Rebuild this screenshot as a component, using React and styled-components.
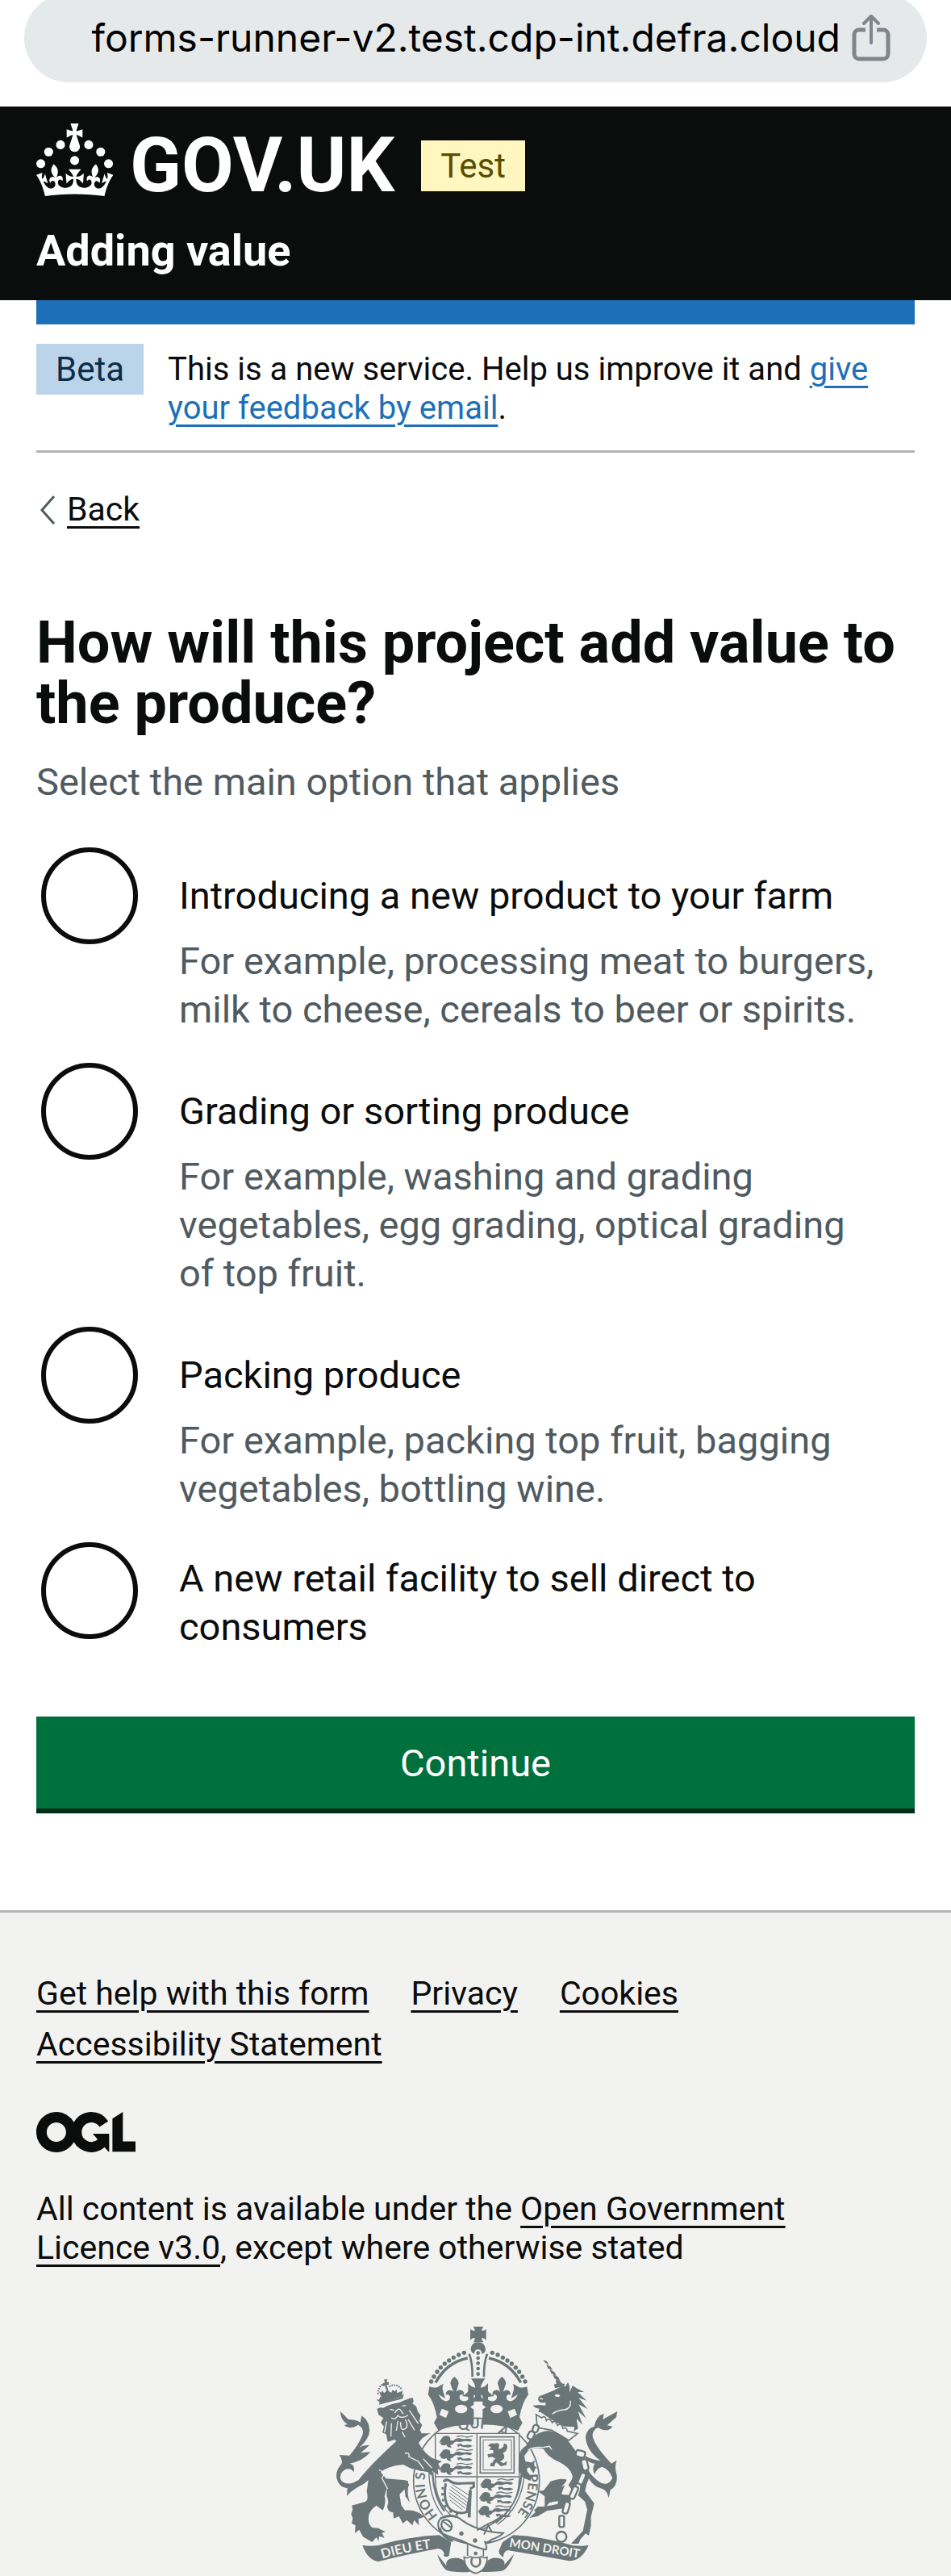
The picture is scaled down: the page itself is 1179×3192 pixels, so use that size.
import React from "react";
import styled, { createGlobalStyle } from "styled-components";

const color = {
  text: "#0b0c0c",
  secondary: "#505a5f",
  link: "#1d70b8",
  border: "#b1b4b6",
  footer: "#f2f2f0",
  crest: "#6b7678",
};

const GlobalStyle = createGlobalStyle`
  *, *::before, *::after { box-sizing: border-box; }
  body {
    margin: 0;
    background: #ffffff;
    color: ${color.text};
    font-family: Roboto, "Liberation Sans", sans-serif;
  }
`;

/* Browser address bar */

const BrowserBar = styled.div`
  display: flex;
  align-items: flex-start;
  height: 132px;
  padding: 0 30px;
  overflow: hidden;
`;

const AddressPill = styled.div`
  flex: 1;
  display: flex;
  align-items: center;
  justify-content: flex-end;
  gap: 14px;
  height: 110px;
  margin-top: -8px;
  padding: 0 45px 0 80px;
  border-radius: 55px;
  background: #e5e9ea;
`;

const Address = styled.span`
  color: #000000;
  font-family: Inter, Roboto, sans-serif;
  font-size: 48px;
  line-height: 60px;
  white-space: nowrap;
`;

const ShareButton = styled.button`
  display: flex;
  padding: 0;
  border: 0;
  background: none;
`;

/* Header */

const Header = styled.header`
  padding: 21px 45px 0;
  background: ${color.text};
  color: #ffffff;
`;

const LogoRow = styled.div`
  display: flex;
  align-items: flex-start;
  gap: 33px;
  height: 90px;
`;

const HomeLink = styled.a`
  display: flex;
  align-items: flex-start;
  gap: 20px;
  color: inherit;
  font-size: 94px;
  font-weight: 700;
  line-height: 105px;
  text-decoration: none;
`;

const Tag = styled.strong`
  flex: none;
  height: 63px;
  margin-top: ${(p) => p.$top || 0}px;
  padding: 6px 24px;
  background: ${(p) => (p.$tone === "yellow" ? "#fff7bf" : "#bbd4ea")};
  color: ${(p) => (p.$tone === "yellow" ? "#594d00" : "#0c2d4a")};
  font-size: 42px;
  font-weight: 400;
  line-height: 51px;
`;

const ServiceLink = styled.a`
  display: block;
  padding: 30px 0 24px;
  color: inherit;
  font-size: 54px;
  font-weight: 700;
  line-height: 75px;
  text-decoration: none;
`;

/* Page */

const Container = styled.div`
  padding: 0 45px;
`;

const BlueBar = styled.div`
  height: 30px;
  background: ${color.link};
`;

const PhaseBanner = styled.div`
  display: flex;
  align-items: flex-start;
  gap: 30px;
  padding: 24px 0 28px;
  border-bottom: 3px solid ${color.border};
`;

const BodyText = styled.p`
  margin: 0;
  font-size: 41px;
  line-height: 48px;
`;

const PhaseText = styled(BodyText)`
  padding-top: 8px;
  font-size: 40px;
`;

const LicenceText = styled(BodyText)`
  padding-right: 60px;
`;

const Link = styled.a`
  color: ${(p) => (p.$blue ? color.link : color.text)};
  text-decoration: underline;
  text-decoration-thickness: 3px;
  text-underline-offset: 7px;
`;

const BackRow = styled.nav`
  display: flex;
  align-items: center;
  gap: 14px;
  margin-top: 45px;
  padding-left: 4px;
  font-size: 41px;
  line-height: 51px;
`;

const Main = styled.main`
  padding-top: 102px;
`;

const Fieldset = styled.fieldset`
  min-width: 0;
  margin: 0;
  padding: 0;
  border: 0;
`;

const Legend = styled.legend`
  padding: 0;
`;

const Heading = styled.h1`
  margin: 0;
  font-size: 72px;
  font-weight: 700;
  line-height: 75px;
`;

const Hint = styled.p`
  margin: 0;
  color: ${color.secondary};
  font-size: 47px;
  line-height: 60px;
`;

const LegendHint = styled(Hint)`
  margin-top: 30px;
`;

const Options = styled.div`
  display: flex;
  flex-direction: column;
  gap: 30px;
  margin-top: 45px;
`;

const Option = styled.div`
  display: grid;
  grid-template-columns: 132px minmax(0, 1fr);
`;

const Radio = styled.input`
  appearance: none;
  width: 120px;
  height: 120px;
  margin: 6px;
  border: 6px solid ${color.text};
  border-radius: 50%;
  background: transparent;
`;

const OptionLabel = styled.label`
  align-self: center;
  padding: 21px 45px;
  font-size: 47px;
  line-height: 60px;
`;

const OptionHint = styled(Hint)`
  grid-column: 2;
  margin-top: -15px;
  padding: 0 45px;
`;

const SubmitButton = styled.button`
  display: block;
  width: 100%;
  height: 120px;
  margin: 60px 0 120px;
  padding: 0 0 6px;
  border: 0;
  background: #00703c;
  box-shadow: inset 0 -6px 0 #002d18;
  color: #ffffff;
  font-family: inherit;
  font-size: 47px;
  line-height: 57px;
`;

/* Footer */

const Footer = styled.footer`
  padding: 76px 45px 0;
  border-top: 3px solid ${color.border};
  background: ${color.footer};
`;

const FooterLinks = styled.ul`
  display: flex;
  flex-wrap: wrap;
  gap: 15px 52px;
  margin: 0 0 60px;
  padding: 0;
  list-style: none;
  font-size: 41px;
  line-height: 48px;
`;

const Licence = styled.div`
  display: flex;
  flex-direction: column;
  gap: 46px;
`;

const CrestLink = styled.a`
  display: flex;
  justify-content: center;
  margin-top: 74px;
`;

const options = [
  {
    id: "new-product",
    label: "Introducing a new product to your farm",
    hint: "For example, processing meat to burgers, milk to cheese, cereals to beer or spirits.",
  },
  {
    id: "grading",
    label: "Grading or sorting produce",
    hint: "For example, washing and grading vegetables, egg grading, optical grading of top fruit.",
  },
  {
    id: "packing",
    label: "Packing produce",
    hint: "For example, packing top fruit, bagging vegetables, bottling wine.",
  },
  { id: "retail", label: "A new retail facility to sell direct to consumers" },
];

const footerLinks = ["Get help with this form", "Privacy", "Cookies", "Accessibility Statement"];

function ShareIcon() {
  return (
    <svg width="48" height="60" viewBox="0 0 48 60" fill="none" stroke="#80868b" strokeWidth="5" aria-hidden="true">
      <path d="M17 20H9a6 6 0 0 0-6 6v24a6 6 0 0 0 6 6h30a6 6 0 0 0 6-6V26a6 6 0 0 0-6-6h-8" />
      <path d="M24 36V4M15 12l9-9 9 9" strokeLinecap="round" strokeLinejoin="round" strokeWidth="4" />
    </svg>
  );
}

function CrownIcon() {
  return (
    <svg width="96" height="90" viewBox="0 0 64 60" fill="currentColor" aria-hidden="true">
      <circle cx="20" cy="17.6" r="3.7" />
      <circle cx="10.2" cy="23.5" r="3.7" />
      <circle cx="3.7" cy="33.2" r="3.7" />
      <circle cx="31.7" cy="30.6" r="3.7" />
      <circle cx="43.3" cy="17.6" r="3.7" />
      <circle cx="53.2" cy="23.5" r="3.7" />
      <circle cx="59.7" cy="33.2" r="3.7" />
      <path d="M33.1,9.8c.2-.1.3-.3.5-.5l4.6,2.4v-6.8l-4.6,1.5c-.1-.2-.3-.3-.5-.5l1.9-5.9h-6.7l1.9,5.9c-.2.1-.3.3-.5.5l-4.6-1.5v6.8l4.6-2.4c.1.2.3.3.5.5l-2.6,8c-.9,2.8,1.2,5.7,4.1,5.7h0c3,0,5.1-2.9,4.1-5.7l-2.6-8ZM37,37.9s-3.4,3.8-4.1,6.1c2.2,0,4.2-.5,6.4-2.8l-.7,8.5c-2-2.8-4.4-4.1-5.7-3.8.1,3.1.5,6.7,5.8,7.2,3.7.3,6.7-1.5,7-3.8.4-2.6-2-4.3-3.7-1.6-1.4-4.5,2.4-6.1,4.9-3.2-1.9-4.5-1.8-7.7,2.4-10.9,3,4,2.6,7.3-1.2,11.1,2.4-1.3,6.2,0,4,4.6-1.2-2.8-3.7-2.2-4.2.2-.3,1.7.7,3.7,3,4.2,1.9.3,4.7-.9,7-5.9-1.3,0-2.4.7-3.9,1.7l2.4-8c.6,2.3,1.4,3.7,2.2,4.5.6-1.6.5-2.8,0-5.3l5,1.8c-2.6,3.6-5.2,8.7-7.3,17.5-7.4-1.1-15.7-1.7-24.5-1.7h0c-8.8,0-17.1.6-24.5,1.7-2.1-8.9-4.7-13.9-7.3-17.5l5-1.8c-.5,2.5-.6,3.7,0,5.3.8-.8,1.6-2.3,2.2-4.5l2.4,8c-1.5-1-2.6-1.7-3.9-1.7,2.3,5,5.2,6.2,7,5.9,2.3-.4,3.3-2.4,3-4.2-.5-2.4-3-3.1-4.2-.2-2.2-4.6,1.6-6,4-4.6-3.7-3.7-4.2-7.1-1.2-11.1,4.2,3.2,4.3,6.4,2.4,10.9,2.5-2.8,6.3-1.3,4.9,3.2-1.8-2.7-4.1-1-3.7,1.6.3,2.3,3.3,4.1,7,3.8,5.4-.5,5.7-4.2,5.8-7.2-1.3-.2-3.7,1-5.7,3.8l-.7-8.5c2.2,2.3,4.2,2.7,6.4,2.8-.7-2.3-4.1-6.1-4.1-6.1h10.6,0Z" />
    </svg>
  );
}

function BackChevron() {
  return (
    <svg width="20" height="36" viewBox="0 0 20 36" fill="none" stroke={color.secondary} strokeWidth="3" aria-hidden="true">
      <path d="M18 1 3 18l15 17" />
    </svg>
  );
}

function OglLogo() {
  return (
    <svg width="123" height="50" viewBox="0 0 483.2 195.7" fill="currentColor" aria-label="Open Government Licence" role="img">
      <path d="M421.5 142.8V.1l-50.7 32.3v161.1h112.4v-50.7zm-122.3-9.6A47.12 47.12 0 0 1 221 97.8c0-26 21.1-47.1 47.1-47.1 16.7 0 31.4 8.7 39.7 21.8l42.7-27.2A97.63 97.63 0 0 0 268.1 0c-36.5 0-68.3 20.1-85.1 49.7A98 98 0 0 0 97.8 0C43.9 0 0 43.9 0 97.8s43.9 97.8 97.8 97.8c36.5 0 68.3-20.1 85.1-49.7a97.76 97.76 0 0 0 149.6 25.4l19.4 22.2h3v-87.8h-80l24.3 27.5zM97.8 145c-26 0-47.1-21.1-47.1-47.1s21.1-47.1 47.1-47.1 47.1 21.1 47.1 47.1S123.8 145 97.8 145" />
    </svg>
  );
}

/* A walking lion, used three to a quarter of the shield */
function SmallLion({ x, y }) {
  return (
    <g transform={`translate(${x} ${y})`}>
      <path d="M12 4q10-6 22-1 8 6 4 15l12 1q10-12 24-9 10 4 22 2 14-2 24 4-2 8-12 6-12-4-24 0-12 4-22 0-10 2-14 10l-10 4 6 9-14-2-6-9-10 2q-9-4-8-12l-8 2 2-6z" />
      <path d="M0 26l12 0 8 10-14-1zM64 32l14-2 8 6 24-2 12 5-14 5-24-2-8-4-8 4z" />
      <path d="M62 5q14-7 26-2t34-1" fill="none" stroke="currentColor" strokeWidth="4" />
    </g>
  );
}

/* One half of the crown's rim, arch and pearls; drawn twice, once mirrored */
function CrownHalf() {
  const pearls = [
    [526, 136], [506, 144], [487, 154], [470, 165], [454, 177], [439, 191], [426, 207], [414, 225], [404, 243],
  ];
  return (
    <g>
      {pearls.map(([cx, cy]) => (
        <circle key={cx} cx={cx} cy={cy} r="8" />
      ))}
      <path d="M539 156q-78 16-119 91" fill="none" stroke="currentColor" strokeWidth="10" />
      <path d="M545 140q13 34 12 86" fill="none" stroke="currentColor" strokeWidth="8" />
      <path d="M397 262q18 6 30 2l22-13q-6 17-1 29l8 26-25-15q13 27 31 25 13-2 11-18-5-10-15-5-1-17 14-18 10 0 14 7l-11-32q1-13 15-25 15 12 16 25l-9 32q6-9 17-7 14 3 11 19-11-8-16 4-2 14 13 18 18 3 27-15l-31-4q23-10 28-26l16 18v115q-70-2-131 22l-17-29 11-21q-10-55-33-84z" />
    </g>
  );
}

function RoyalCrest() {
  return (
    <svg width="380" height="309" viewBox="0 39 1140 927" fill="currentColor" color={color.crest} role="img" aria-label="Royal coat of arms">
      <defs>
        <path id="garter-left" d="M429 742A192 192 0 0 1 444 470" />
        <path id="garter-top" d="M508 428A196 196 0 0 1 660 438" />
        <path id="garter-top-right" d="M650 434A196 196 0 0 1 740 512" />
        <path id="garter-right" d="M752 546A192 192 0 0 1 640 794" />
        <path id="ribbon-left" d="M222 902Q320 872 440 860" />
        <path id="ribbon-right" d="M693 857Q820 876 980 904" />
      </defs>

      {/* garter */}
      <path d="M352 480q18-34 50-44h-46l-40-4 40 66z" />
      <circle cx="572" cy="613" r="234" fill={color.footer} stroke="currentColor" strokeWidth="5" />
      <path d="M395 575q2 105 52 165M750 590q-10 120-100 185" fill="none" stroke="currentColor" strokeWidth="4" />
      <path d="M409 580q3 90 44 145M739 590q-8 110-95 178" fill="none" stroke="currentColor" strokeWidth="7" />

      {/* crown */}
      <path d="M549 47q6 9 17 7-1-7-6-15h38q-6 8-6 15 10 2 16-7v42q-7-9-16-8-1 9 6 16h-38q7-7 6-16-11-1-17 8z" />
      <path d="M551 126q0-29 27-29t28 29q-4 14-14 14-1-16-14-16t-14 16q-9-2-13-14z" />
      <CrownHalf />
      <g transform="matrix(-1 0 0 1 1157 0)">
        <CrownHalf />
      </g>
      <path d="M552 232h53q-15 18-17 34 16-2 27-17v62q-13-17-27-18 4 18 20 24h-60q17-7 20-24-15 1-27 18v-62q11 15 27 17-2-16-16-34z" />
      {[137, 156, 175, 195, 215].map((cy) => (
        <circle key={cy} cx="578" cy={cy} r="7" />
      ))}
      <g fill={color.footer}>
        <ellipse cx="515" cy="345" rx="23" ry="16" />
        <ellipse cx="647" cy="345" rx="23" ry="16" />
        <path d="M549 338l29-20 29 20-29 20zM434 367l9-23 26 10-10 25zM723 367l-9-23-26 10 10 25z" />
      </g>

      {/* garter lettering */}
      <g fontFamily="Lato, Roboto, sans-serif" fontSize="50" fontWeight="700">
        <text><textPath href="#garter-left">HONI SO</textPath></text>
        <text><textPath href="#garter-top">QUI</textPath></text>
        <text><textPath href="#garter-top-right">A</textPath></text>
        <text><textPath href="#garter-right">Y PENSE</textPath></text>
      </g>

      {/* shield */}
      <path d="M419 436h312v170q0 130-157 196-155-66-155-196z" fill={color.footer} stroke="currentColor" strokeWidth="4" />
      <path d="M574 436v366M419 597h312" fill="none" stroke="currentColor" strokeWidth="4" />
      {[444, 494, 546].map((y) => (
        <SmallLion key={y} x={436} y={y} />
      ))}
      {[604, 653, 704].map((y, i) => (
        <SmallLion key={y} x={588 - i * 4} y={y} />
      ))}
      <g fill="none" stroke="currentColor">
        <path d="M586 449h126v134H586z" strokeWidth="5" />
        <path d="M597 460h105v112H597z" strokeWidth="3" />
      </g>
      <path d="M615 482q10-14 24-8 10-6 18 2l-3 17q14 2 20-12l-2-6q14-4 15 11-2 18-17 23 10 9 3 23l-13 9 13 6 12-8-1 14-21 5-16-14q-8 3-8 15l-17-2 4-11 8-2q-2-9 9-14l-12-7-15 3-3-12 22-5-1-11-15-1 8-10z" />
      <g fill="none" stroke="currentColor">
        <path d="M450 616q7-12 22-4 14 12 40 10 32-2 50-2v14l-14 8M458 622q-8 40 2 72 8 26 34 34 22 8 42 0l14-74" strokeWidth="9" />
        <path d="M549 646l-4 102" strokeWidth="11" />
        <path d="M482 626l62 40M476 634l66 48M472 644l68 50M470 656l66 48M470 668l60 46M474 684l46 36" strokeWidth="3" />
        <path d="M450 640h-8M450 662h-9M452 684h-8M460 704l-8 5M478 722l-4 8M500 732l-2 9" strokeWidth="9" />
      </g>

      {/* lion supporter */}
      <path d="M268 470Q180 550 133 610Q92 634 70 612Q56 588 84 570Q104 562 116 580Q122 552 100 548Q148 540 178 505Q158 506 142 508L174 480Q148 478 136 490Q178 450 174 420Q172 388 145 370L140 395Q124 384 96 384L66 354Q66 386 92 402L80 406Q100 424 132 404Q156 418 148 442Q132 482 100 518L62 516Q76 536 70 550Q48 572 52 602Q60 636 92 640L90 668Q108 648 130 636Q154 626 170 610L164 652Q172 684 158 690L108 704L112 718L106 736L112 752L108 770L122 778L120 806L136 794L150 820L184 840L200 822L208 836L210 818L230 824L220 806L234 802L206 788L184 786Q166 770 172 740Q176 720 200 704L224 722Q238 690 230 670L244 620Q290 620 304 640L308 670L324 694Q310 644 322 626L308 610L236 604L216 580Q244 556 300 552L328 566L360 574L392 580L404 594L408 576L430 590L428 568L440 572L430 548L444 540L408 528Q380 510 362 480L346 450L300 440z" />
      <path d="M240 610l-2 60q10 16 2 38 2 20 22 22l2 22 20-8 14 26 16-12 20 20 6-20 18 20-2-24 22-8q-28-28-72-24l-14-20-6-40 30-30 2-20z" />
      <path d="M212 318q-10-2-10-9l8 2 4-12q20 16 44 10 24-2 44-20l-4 18q-40 10-88 22z" />
      <path d="M202 345q10-8 24-4 20-14 60-20 30-14 48-18 8 12 0 22l14 10 6 20 10 14-4 22 10 14-8 18 6 14-14 4-2 16-18-8-18-2q-24 8-34 24l-14-12-26 8-6-28-14-6 6-22-12-16 10-16-18-12z" />
      <g fill="none" stroke={color.footer} strokeWidth="4">
        <path d="M250 346l16 4M296 334l14-2M268 360q14-24 24-8l8 12M255 378q16 10 24-8 16 14 38-2M280 390l-6 36M290 394q-2 36 18 24 12-8 0-34M322 350l34 50M318 384l24 40M238 392l-8 40M256 398l-2 50" />
        <path d="M306 510q20-4 14 12l36 18 20 28M374 530l32 34M210 572q28 10 10 30l22 40M296 430l10 20" />
      </g>
      <path d="M216 296l-6-16 8 4 4-8 6 10 8-6 4-16 6 16 10 4 4-10 8 6 8-8v14l22-8-4 18q-30 16-70 18z" />
      <path d="M229 235h12l-3 10 8 1v10l-8-1 4 16h-8l-2-13-8 3-2-10 9-2z" />
      <path d="M206 290q0-30 24-40M248 262q26-16 48 12" fill="none" stroke="currentColor" strokeWidth="6" strokeDasharray="5 4" />

      {/* unicorn supporter */}
      <path d="M820 162l14 6 8 14-16-10zM832 180l16 8 8 14-18-8zM844 198l18 10 8 14-20-10zM856 216l20 10 8 16-22-10zM868 234l20 12 6 16-26-12z" />
      <path d="M802 312Q798 298 816 294L860 276Q880 262 904 260Q912 246 912 246Q922 262 918 278Q944 300 948 340Q950 378 938 412L898 410L850 384L812 358L802 356L806 344Q790 342 782 332L806 330L828 332L830 322L812 322Q804 320 802 312z" />
      <path d="M860 254l20-6 22 4-6 10-32 6z" />
      <path d="M930 258l14 10 28 14-24 0 34 32-30-10 34 42-34-18 28 52-30-26 16 50-22-24 6 38-16 10 8-50-2-60-20-40z" />
      <path d="M862 294q14-8 22 2-12 10-22-2z" fill={color.footer} />
      <path d="M922 314q2 32-24 34-26 2-44 16" fill="none" stroke={color.footer} strokeWidth="4" />
      <path d="M808 308q6-6 10 2" fill="none" stroke={color.footer} strokeWidth="4" />
      <path d="M794 366l20 12q14-12 18 10 12-14 22 8 10-14 20 10 14-12 20 12 14-8 16 10l38 8-32 26-64-38-54-10z" fill={color.footer} stroke="currentColor" strokeWidth="5" />
      <path fillRule="evenodd" d="M756 482Q784 430 840 426Q880 430 912 462L940 500L970 520L990 576Q1010 606 1036 620Q1062 632 1078 602Q1066 570 1040 560Q1018 566 1012 588Q1000 568 1012 548Q984 546 970 516Q1000 534 1034 538Q980 500 978 448Q984 416 1010 410Q1018 370 1046 362L1042 384L1096 354L1092 376L1058 406L1078 410Q1060 436 1024 414Q1002 424 1004 448Q1014 486 1074 548L1094 536Q1084 560 1094 590Q1098 630 1070 646L1064 676Q1058 648 1040 642Q1008 636 990 604Q980 624 976 650L1010 696L998 746L998 780L990 816L978 808L958 830L952 846H924L968 798L984 720L976 690L950 666Q962 640 956 612L930 650L914 628Q934 600 928 590Q920 562 880 542Q836 524 822 494Q790 484 764 500L750 520L754 540L786 546L790 570L784 584L762 552L760 576L778 600L772 612L744 600L728 572L730 520Q734 494 756 482z" />
      <path d="M908 608q-20-8-60 6l-26 34-22 2 26 20v46l16-22q20-6 38-6l12-38z" />
      <path d="M882 662l-8 36q-40 10-74 10l-14 14 6 6-24 22 32-6 34-20 80-12 16-46z" />
      <path d="M918 590q-4 24-26 42M820 488l24-4 8 12M764 498q20-14 56-10" fill="none" stroke={color.footer} strokeWidth="4" />
      <g fill={color.footer} stroke="currentColor" strokeWidth="7">
        <rect x="764" y="428" width="22" height="30" rx="9" transform="rotate(28 775 443)" />
        <rect x="782" y="404" width="20" height="28" rx="9" transform="rotate(20 792 418)" />
        <rect x="942" y="500" width="34" height="24" rx="8" transform="rotate(14 959 512)" />
        <rect x="964" y="532" width="22" height="42" rx="9" transform="rotate(-14 975 553)" />
        <rect x="954" y="582" width="20" height="44" rx="8" transform="rotate(22 964 604)" />
        <rect x="924" y="632" width="20" height="48" rx="8" transform="rotate(24 934 656)" />
        <rect x="896" y="690" width="20" height="44" rx="8" transform="rotate(16 906 712)" />
        <rect x="880" y="742" width="18" height="42" rx="6" />
        <circle cx="888" cy="820" r="19" />
      </g>

      {/* strap and buckle */}
      <path d="M430 768q6-24 40-26 28-2 50 18 60 42 152 46-14 16-44 24-10 14-24 10 8 20 4 28-44-8-92-34-46-14-74-28-14-12-12-38z" fill={color.footer} stroke="currentColor" strokeWidth="6" />
      <ellipse cx="461" cy="778" rx="18" ry="22" fill="none" stroke="currentColor" strokeWidth="7" transform="rotate(-35 461 778)" />
      <path d="M450 764l28 22" stroke="currentColor" strokeWidth="6" />
      <path d="M434 786q14 40 50 50M438 752q30-14 60-6" fill="none" stroke="currentColor" strokeWidth="8" />
      <circle cx="516" cy="808" r="8" />
      <circle cx="567" cy="834" r="8" />
      <path d="M574 796l42-24q30-10 54-34M600 812l16-34 14 26" fill="none" stroke="currentColor" strokeWidth="6" />
      <path d="M539 850v42M598 866v28" stroke="currentColor" strokeWidth="5" />

      {/* motto ribbon */}
      <path d="M148 852q30 4 60 0 120-34 226-38l44 26-8 50q-12 10-20 0 6-10-8-22l-12-4q-100 18-222 48-40-4-60-60z" />
      <path d="M989 852q-30 4-60 0-120-34-220-38l-40 26-14 34q4 18 18 22-4-16 14-26 120 20 230 40 46 0 72-58z" />
      <path d="M426 884q20 62 46 64 50 6 76 2l-18-38q-20-18-50-12-24 6-20 28zM712 884q-24 62-50 64-46 4-72 2l20-38q18-18 46-12 24 4 20 24z" />
      <path d="M526 896q14 6 22-2 22 8 42 0 8 8 22 2-2 50-43 60-40-10-43-60z" fill={color.footer} stroke="currentColor" strokeWidth="5" />
      <path d="M556 898q-10 30 14 34 22-4 14-34" fill="none" stroke="currentColor" strokeWidth="7" />
      <circle cx="569" cy="882" r="7" />
      <g fill={color.footer} fontFamily="Lato, Roboto, sans-serif" fontWeight="700">
        <text fontSize="49"><textPath href="#ribbon-left">DIEU ET</textPath></text>
        <text fontSize="45"><textPath href="#ribbon-right">MON DROIT</textPath></text>
      </g>
    </svg>
  );
}

export default function App() {
  return (
    <>
      <GlobalStyle />
      <BrowserBar>
        <AddressPill>
          <Address>forms-runner-v2.test.cdp-int.defra.cloud</Address>
          <ShareButton type="button" aria-label="Share">
            <ShareIcon />
          </ShareButton>
        </AddressPill>
      </BrowserBar>

      <Header>
        <LogoRow>
          <HomeLink href="#">
            <CrownIcon />
            GOV.UK
          </HomeLink>
          <Tag $tone="yellow" $top={21}>Test</Tag>
        </LogoRow>
        <ServiceLink href="#">Adding value</ServiceLink>
      </Header>

      <Container>
        <BlueBar />
        <PhaseBanner>
          <Tag $tone="blue">Beta</Tag>
          <PhaseText>
            This is a new service. Help us improve it and{" "}
            <Link $blue href="#">give your feedback by email</Link>.
          </PhaseText>
        </PhaseBanner>
        <BackRow aria-label="Back">
          <BackChevron />
          <Link href="#">Back</Link>
        </BackRow>

        <Main>
          <form onSubmit={(e) => e.preventDefault()}>
            <Fieldset aria-describedby="question-hint">
              <Legend>
                <Heading>How will this project add value to the produce?</Heading>
              </Legend>
              <LegendHint id="question-hint">Select the main option that applies</LegendHint>
              <Options>
                {options.map((o) => (
                  <Option key={o.id}>
                    <Radio type="radio" name="addValue" id={o.id} value={o.id} aria-describedby={o.hint ? `${o.id}-hint` : undefined} />
                    <OptionLabel htmlFor={o.id}>{o.label}</OptionLabel>
                    {o.hint && <OptionHint id={`${o.id}-hint`}>{o.hint}</OptionHint>}
                  </Option>
                ))}
              </Options>
            </Fieldset>
            <SubmitButton type="submit">Continue</SubmitButton>
          </form>
        </Main>
      </Container>

      <Footer>
        <FooterLinks>
          {footerLinks.map((label) => (
            <li key={label}>
              <Link href="#">{label}</Link>
            </li>
          ))}
        </FooterLinks>
        <Licence>
          <OglLogo />
          <LicenceText>
            All content is available under the <Link href="#">Open Government Licence v3.0</Link>, except where otherwise stated
          </LicenceText>
        </Licence>
        <CrestLink href="#">
          <RoyalCrest />
        </CrestLink>
      </Footer>
    </>
  );
}
